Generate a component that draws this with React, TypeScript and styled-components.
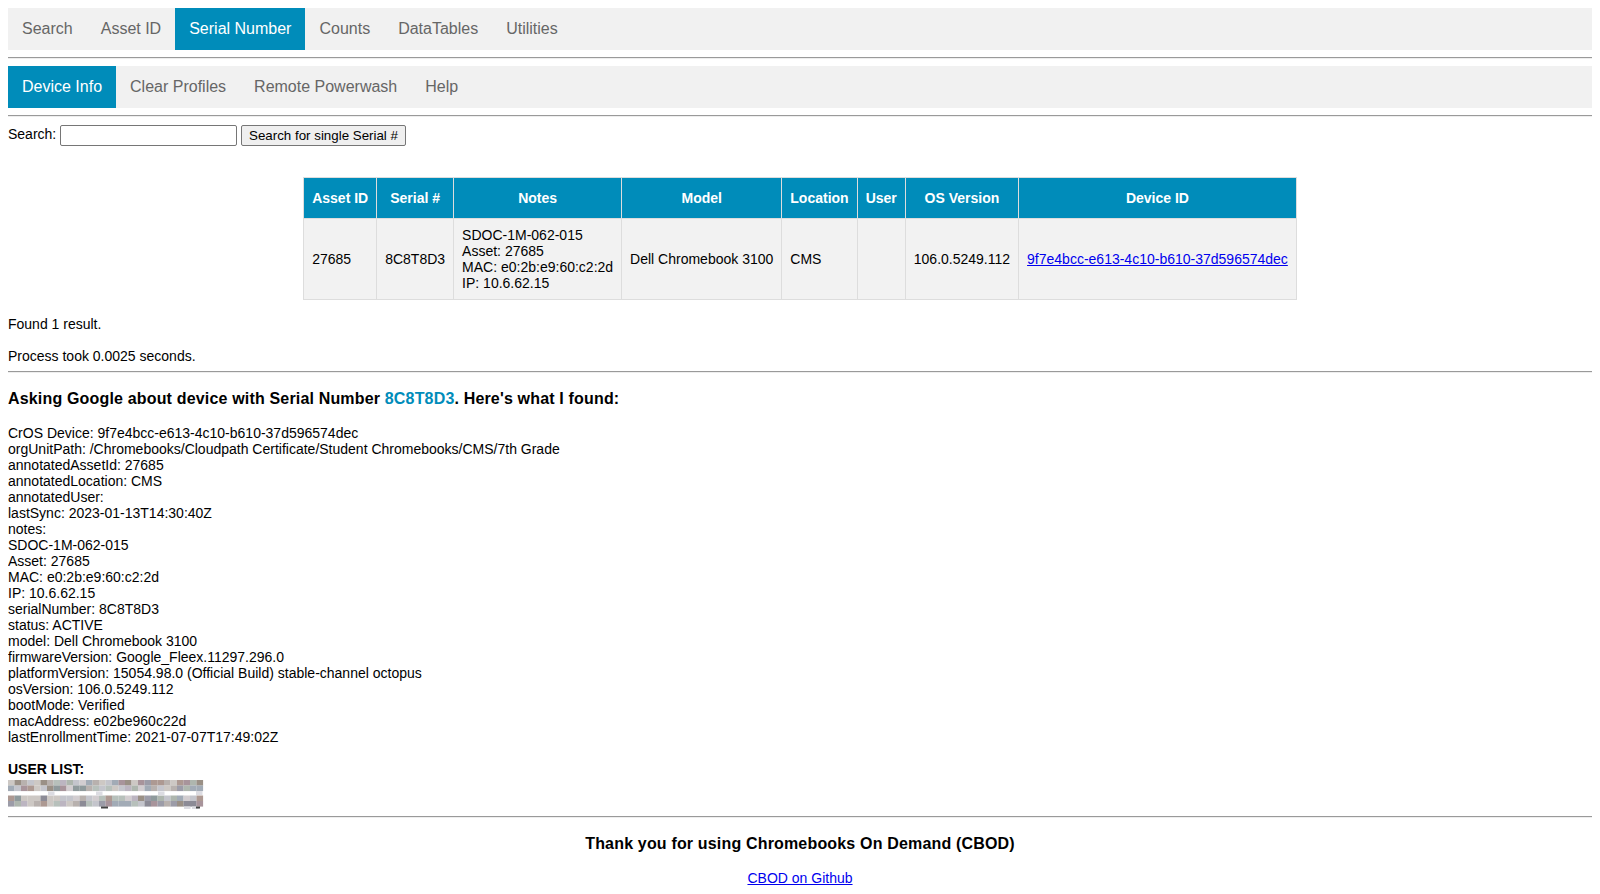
import React from 'react';
import styled, { createGlobalStyle } from 'styled-components';

const GlobalStyle = createGlobalStyle`
    body {
        margin: 8px;
        font-family: Arial, "Liberation Sans", sans-serif;
        font-size: 14px;
        color: #000;
        background: #fff;
    }
    hr {
        margin: 7px 0;
        border: 0;
        border-top: 1px solid #9a9a9a;
        border-bottom: 1px solid #eeeeee;
    }
`;

const NavBar = styled.div`
    display: flex;
    flex-direction: row;
    background-color: #f1f1f1;
`;

const NavLink = styled.a<{ $active?: boolean }>`
    display: block;
    padding: 12px 14px;
    font-size: 16px;
    line-height: 18px;
    text-decoration: none;
    color: ${p => (p.$active ? '#ffffff' : '#666666')};
    background-color: ${p => (p.$active ? '#008cba' : 'transparent')};
    cursor: pointer;
`;

const SearchForm = styled.form`
    display: block;
    line-height: 21px;
`;

const SearchInput = styled.input`
    box-sizing: border-box;
    width: 177px;
    height: 21px;
    padding: 1px 2px;
    border: 1px solid #767676;
    border-radius: 2px;
    font-family: Arial, "Liberation Sans", sans-serif;
    font-size: 13.33px;
    vertical-align: middle;
`;

const SearchButton = styled.button`
    box-sizing: border-box;
    height: 21px;
    padding: 1px 7px;
    border: 1px solid #767676;
    border-radius: 2px;
    background-color: #efefef;
    font-family: Arial, "Liberation Sans", sans-serif;
    font-size: 13.33px;
    color: #000;
    vertical-align: middle;
`;

const Table = styled.table`
    margin: 31px auto 0;
    border-collapse: collapse;
    font-size: 14px;
`;

const Th = styled.th`
    border: 1px solid #dddddd;
    padding: 12px 8px;
    line-height: 16px;
    background-color: #008cba;
    color: #ffffff;
    font-weight: bold;
    text-align: center;
`;

const Td = styled.td`
    border: 1px solid #dddddd;
    padding: 8px;
    line-height: 16px;
    background-color: #f2f2f2;
    text-align: left;
    vertical-align: middle;
`;

const DeviceLink = styled.a`
    color: #0000ee;
    text-decoration: underline;
`;

const Results = styled.div`
    margin-top: 16px;
    line-height: 16px;
    display: flex;
    flex-direction: column;
    gap: 16px;
`;

const Heading = styled.h3`
    margin: 17px 0 17px;
    font-size: 16px;
    line-height: 18px;
    font-weight: bold;
    letter-spacing: 0.17px;
`;

const Highlight = styled.span`
    color: #008cba;
`;

const InfoList = styled.div`
    line-height: 16px;
    white-space: pre-line;
`;

const UserList = styled.div`
    margin-top: 16px;
    line-height: 16px;
`;

const UserTitle = styled.div`
    font-weight: bold;
`;

const Mosaic = styled.svg`
    display: block;
    margin-top: 3px;
    width: 196px;
    height: 29px;
`;

const Footer = styled.div`
    text-align: center;
`;

const FooterTitle = styled.h3`
    margin: 17px 0 17px;
    font-size: 16px;
    line-height: 18px;
    font-weight: bold;
    letter-spacing: 0.17px;
`;

const FooterLink = styled.a`
    display: inline-block;
    line-height: 16px;
    color: #0000ee;
    text-decoration: underline;
`;

const topTabs = ['Search', 'Asset ID', 'Serial Number', 'Counts', 'DataTables', 'Utilities'];
const subTabs = ['Device Info', 'Clear Profiles', 'Remote Powerwash', 'Help'];
const headers = ['Asset ID', 'Serial #', 'Notes', 'Model', 'Location', 'User', 'OS Version', 'Device ID'];

const deviceInfo = [
    'CrOS Device: 9f7e4bcc-e613-4c10-b610-37d596574dec',
    'orgUnitPath: /Chromebooks/Cloudpath Certificate/Student Chromebooks/CMS/7th Grade',
    'annotatedAssetId: 27685',
    'annotatedLocation: CMS',
    'annotatedUser:',
    'lastSync: 2023-01-13T14:30:40Z',
    'notes:',
    'SDOC-1M-062-015',
    'Asset: 27685',
    'MAC: e0:2b:e9:60:c2:2d',
    'IP: 10.6.62.15',
    'serialNumber: 8C8T8D3',
    'status: ACTIVE',
    'model: Dell Chromebook 3100',
    'firmwareVersion: Google_Fleex.11297.296.0',
    'platformVersion: 15054.98.0 (Official Build) stable-channel octopus',
    'osVersion: 106.0.5249.112',
    'bootMode: Verified',
    'macAddress: e02be960c22d',
    'lastEnrollmentTime: 2021-07-07T17:49:02Z',
];

// blurred user list, drawn as a pixel mosaic
const mosaicColors = ['#9c9ca8', '#b8b1ae', '#a8949b', '#c4c5cc', '#8f9a9c', '#aeb6ae', '#cdc8c4', '#9a9086', '#bcb5c1', '#a2abb6', '#d2cdd0', '#8c8b96', '#b7c0bb', '#ad9992'];
const mosaicRows = [0, 5.5, 15.5, 21];

const buildMosaic = () => {
    const rects: JSX.Element[] = [];
    let seed = 7;
    const rand = () => {
        seed = (seed * 9301 + 49297) % 233280;
        return seed / 233280;
    };
    mosaicRows.forEach((y, r) => {
        for (let i = 0; i < 30; i++) {
            const c = mosaicColors[Math.floor(rand() * mosaicColors.length)];
            rects.push(<rect key={`${r}-${i}`} x={i * 6.5} y={y} width={6.6} height={5.6} fill={c} />);
        }
    });
    // faint bits between the lines and below
    [[40, 11.5], [88, 11.5], [150, 11.5], [188, 11], [176, 26.5], [184, 26.5]].forEach(([x, y], i) => {
        rects.push(<rect key={`b${i}`} x={x} y={y} width={6.5} height={4} fill="#dcdce2" />);
    });
    rects.push(<rect key="at" x={93} y={26.5} width={7} height={2} fill="#444" />);
    rects.push(<rect key="g" x={188} y={26.5} width={4} height={2} fill="#444" />);
    return rects;
};

const App = (): JSX.Element => {
    return (
        <>
            <GlobalStyle />
            <NavBar>
                {topTabs.map(t => (
                    <NavLink key={t} $active={t === 'Serial Number'}>{t}</NavLink>
                ))}
            </NavBar>
            <hr />
            <NavBar>
                {subTabs.map(t => (
                    <NavLink key={t} $active={t === 'Device Info'}>{t}</NavLink>
                ))}
            </NavBar>
            <hr />
            <SearchForm onSubmit={e => e.preventDefault()}>
                Search: <SearchInput type="text" /> <SearchButton type="submit">Search for single Serial #</SearchButton>
            </SearchForm>
            <Table>
                <thead>
                    <tr>
                        {headers.map(h => <Th key={h}>{h}</Th>)}
                    </tr>
                </thead>
                <tbody>
                    <tr>
                        <Td>27685</Td>
                        <Td>8C8T8D3</Td>
                        <Td>SDOC-1M-062-015<br />Asset: 27685<br />MAC: e0:2b:e9:60:c2:2d<br />IP: 10.6.62.15</Td>
                        <Td>Dell Chromebook 3100</Td>
                        <Td>CMS</Td>
                        <Td></Td>
                        <Td>106.0.5249.112</Td>
                        <Td><DeviceLink href="#">9f7e4bcc-e613-4c10-b610-37d596574dec</DeviceLink></Td>
                    </tr>
                </tbody>
            </Table>
            <Results>
                <div>Found 1 result.</div>
                <div>Process took 0.0025 seconds.</div>
            </Results>
            <hr />
            <Heading>
                Asking Google about device with Serial Number <Highlight>8C8T8D3</Highlight>. Here's what I found:
            </Heading>
            <InfoList>{deviceInfo.join('\n')}</InfoList>
            <UserList>
                <UserTitle>USER LIST:</UserTitle>
                <Mosaic viewBox="0 0 196 29">{buildMosaic()}</Mosaic>
            </UserList>
            <hr />
            <Footer>
                <FooterTitle>Thank you for using Chromebooks On Demand (CBOD)</FooterTitle>
                <FooterLink href="#">CBOD on Github</FooterLink>
            </Footer>
        </>
    );
};

export default App;
